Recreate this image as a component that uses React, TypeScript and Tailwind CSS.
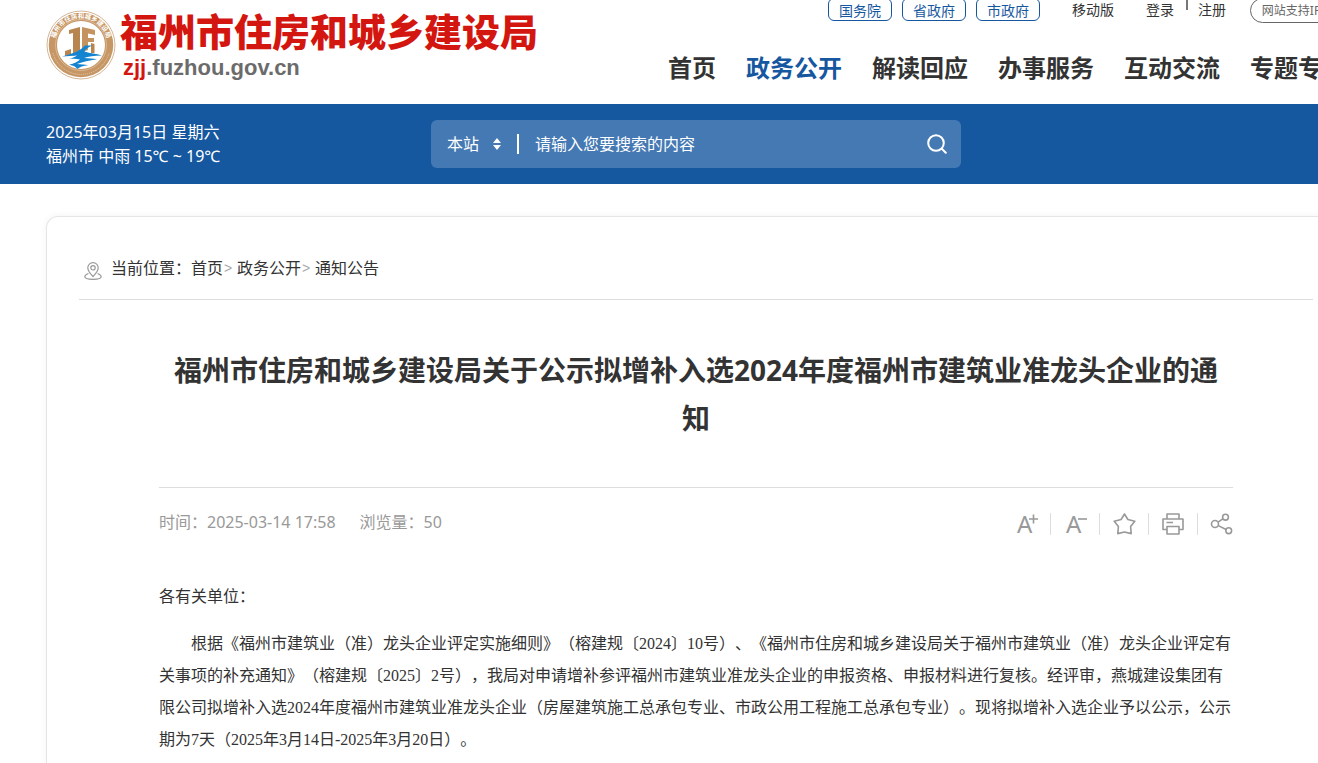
import React from "react";

const sans = "font-['Noto_Sans','Noto_Sans_CJK_SC',sans-serif]";
const song = "font-['Liberation_Serif','Noto_Sans_CJK_SC',serif]";

const portals = ["国务院", "省政府", "市政府"];
const navItems = ["首页", "政务公开", "解读回应", "办事服务", "互动交流", "专题专栏"];

function Emblem() {
  return (
    <svg viewBox="0 0 70 70" className="size-[70px] shrink-0" aria-hidden="true">
      <defs>
        <path id="ring" d="M 9.5 42 A 26.5 26.5 0 1 1 60.5 42" />
      </defs>
      <circle cx="35" cy="35" r="34" fill="#fff" stroke="#c9a27a" strokeWidth="0.8" />
      <circle cx="35" cy="35" r="32.3" fill="#c69665" />
      <circle cx="35" cy="35" r="24" fill="#fff" />
      <circle cx="35" cy="35" r="25.5" fill="none" stroke="#e7cfb4" strokeWidth="0.6" />
      <path d="M7 43 A29 29 0 0 0 63 43" fill="none" stroke="#e6cdb0" strokeWidth="1" strokeDasharray="1 1" />
      <text fontSize="6.4" fontWeight="700" fill="#fff">
        <textPath href="#ring" startOffset="50%" textAnchor="middle">福州市住房和城乡建设局</textPath>
      </text>
      <path d="M23 20 L34 17 V43 L27 46 V23 L23 24 Z" fill="#b9854f" />
      <path d="M19 41 L25 39 V45 L19 46 Z" fill="#b9854f" />
      <path d="M36 17 L49 20 V25 L42 23.500 V28 H48 V32 H42 V40 L36 42 Z" fill="#c4935f" />
      <path d="M45 33 L48.500 34 V43 H45 Z" fill="#b9854f" />
      <path d="M16 46.500 C26 44 34 41 39 35.500 L46 35.500 C41 38 39 40 38.500 41.500 C44 43.500 50 43.500 56 45.500 C48 45.800 42 46.500 38 48 C43 48.500 47 48.500 51 49.200 C43 50.500 37 51.500 31 54 C35 54.200 39 54.600 42 55.300 C37 56 34 57 31 59 C30.500 57 27 55.500 23 54.800 C28 53.500 32 51.500 34 49.500 C30 48.500 27 48.800 23 49 C27 47.800 29 47 31 45.500 C26 45.500 22 46.300 16 46.500 Z" fill="#1584d0" />
    </svg>
  );
}

function Header() {
  return (
    <header className="flex h-[104px] justify-between px-[46px]">
      <a href="#" className="flex items-start gap-1 pt-2.5">
        <Emblem />
        <span className="flex flex-col">
          <span className="h-11 whitespace-nowrap font-['Noto_Sans_CJK_SC',sans-serif] text-[38px] font-black leading-10 text-[#d3160f]">
            福州市住房和城乡建设局
          </span>
          <span className="pl-[3px] font-['Liberation_Sans',sans-serif] text-[22px] font-bold leading-7 text-[#6b6b6b]">
            <span className="text-[#d3160f]">zjj</span>.fuzhou.gov.cn
          </span>
        </span>
      </a>

      <div className="w-[678px] shrink-0">
        <div className="-mt-0.5 flex h-[25px] items-start whitespace-nowrap pl-40 text-sm">
          <div className="flex gap-2.5">
            {portals.map((p) => (
              <a key={p} href="#" className="flex h-[23px] w-16 items-center justify-center rounded-md border border-[#1658a0] pt-0.5 text-[#1658a0]">
                {p}
              </a>
            ))}
          </div>
          <a href="#" className="ml-8 leading-6">移动版</a>
          <a href="#" className="ml-8 leading-6">登录</a>
          <span className="ml-3 mr-2.5 h-3 w-0.5 bg-[#777]" />
          <a href="#" className="leading-6">注册</a>
          <a href="#" className="ml-6 flex h-[25px] w-24 items-center justify-center rounded-full border border-[#666] text-xs text-[#666]">
            网站支持IPv6
          </a>
        </div>
        <nav className="flex gap-[30px] whitespace-nowrap pt-[29px] text-2xl font-bold leading-8">
          {navItems.map((n) => (
            <a key={n} href="#" className={n === "政务公开" ? "text-[#1658a0]" : "text-[#333]"}>
              {n}
            </a>
          ))}
        </nav>
      </div>
    </header>
  );
}

function SearchBar() {
  return (
    <div className="grid h-20 grid-cols-[1fr_530px_1fr] items-center bg-[#1658a0] px-[46px] text-base leading-6 text-white">
      <div>
        <p>2025年03月15日 星期六</p>
        <p>福州市 中雨 15℃ ~ 19℃</p>
      </div>
      <form className="flex h-12 items-center rounded-md bg-[#4579b3] px-4" onSubmit={(e) => e.preventDefault()}>
        <label className="flex items-center">
          <select aria-label="搜索范围" className="w-[46px] appearance-none bg-transparent text-white outline-none">
            <option>本站</option>
          </select>
          <svg viewBox="0 0 8 12" className="h-3 w-2" fill="#fff" aria-hidden="true">
            <path d="M4 0 L8 5 H0 Z M0 7 H8 L4 12 Z" />
          </svg>
        </label>
        <span className="ml-4 h-5 w-0.5 bg-white" />
        <input
          type="text"
          aria-label="搜索内容"
          placeholder="请输入您要搜索的内容"
          className="ml-4 min-w-0 grow bg-transparent text-white outline-none placeholder:text-white"
        />
        <button type="submit" aria-label="搜索" className="-mr-2 flex size-8 items-center justify-center">
          <svg viewBox="0 0 20 20" className="size-5" fill="none" stroke="#fff" strokeWidth="2" strokeLinecap="round" aria-hidden="true">
            <circle cx="9" cy="9" r="7.800" />
            <path d="M14.800 14.800 L18.800 18.800" />
          </svg>
        </button>
      </form>
    </div>
  );
}

function Crumb({ children }: { children: React.ReactNode }) {
  return (
    <>
      <span className="w-3.5 pl-px font-['Liberation_Sans',sans-serif] text-sm leading-6 text-[#aaa]">&gt;</span>
      <a href="#">{children}</a>
    </>
  );
}

function Breadcrumb() {
  return (
    <nav className="flex h-[83px] items-end border-b border-[#ddd] pb-[19px] pl-[5px] text-base leading-6 text-[#333]">
      <svg viewBox="0 0 18 18" className="mr-[9px] h-[18px] w-[18px]" fill="none" stroke="#999" strokeWidth="1.2" aria-hidden="true">
        <path d="M9 14.500 C6 11.500 3.800 9 3.800 5.800 A5.200 5.200 0 0 1 14.200 5.800 C14.200 9 12 11.500 9 14.500 Z" />
        <circle cx="9" cy="5.800" r="2.200" />
        <path d="M4.500 11.500 C2 12.300 0.800 13.300 0.800 14.800 C0.800 16.500 4 17.300 9 17.300 C14 17.300 17.200 16.500 17.200 14.800 C17.200 13.300 16 12.300 13.500 11.500" />
      </svg>
      <span>当前位置：</span>
      <a href="#">首页</a>
      <Crumb>政务公开</Crumb>
      <Crumb>通知公告</Crumb>
    </nav>
  );
}

function ToolIcon({ children }: { children: React.ReactNode }) {
  return (
    <svg viewBox="0 0 22 22" className="size-[22px] overflow-visible" fill="none" stroke="#999" strokeWidth="1.6" strokeLinejoin="round" aria-hidden="true">
      {children}
    </svg>
  );
}

const letterA = (
  <text x="2" y="20" fontSize="24" fill="#999" stroke="none">
    A
  </text>
);

const tools = [
  { label: "放大字体", icon: <>{letterA}<path d="M14 6 H23 M18.500 1.500 V10.500" /></> },
  { label: "缩小字体", icon: <>{letterA}<path d="M14 6 H23" /></> },
  {
    label: "收藏",
    icon: <path d="M11.500 1 L14.900 6.500 L21.800 8.200 L17.600 13.600 L18.200 20.600 L11.500 19 L4.800 20.600 L5.400 13.600 L1.200 8.200 L8.100 6.500 Z" />,
  },
  {
    label: "打印",
    icon: (
      <>
        <path d="M5 6 V1 H17 V6 M5 16.500 H1 V6 H21 V16.500 H17" />
        <path d="M5 13.500 H17 V21 H5 Z M4.500 9.500 H11" />
      </>
    ),
  },
  {
    label: "分享",
    icon: (
      <>
        <circle cx="4" cy="11" r="3.500" />
        <circle cx="14.500" cy="4.200" r="2.900" />
        <circle cx="17.700" cy="17.700" r="2.900" />
        <path d="M7.100 9.200 L12.100 5.700 M7.300 12.600 L15.100 16.500" />
      </>
    ),
  },
];

function MetaRow() {
  return (
    <div className="flex items-center justify-between border-t border-[#ddd] pt-[22px]">
      <p className="flex gap-6 pb-1 text-base leading-6 text-[#999]">
        <span>时间：2025-03-14 17:58</span>
        <span>浏览量：50</span>
      </p>
      <div className="flex items-center divide-x divide-[#ddd]">
        {tools.map((t) => (
          <button key={t.label} type="button" aria-label={t.label} className="px-[13px] last:pr-0">
            <ToolIcon>{t.icon}</ToolIcon>
          </button>
        ))}
      </div>
    </div>
  );
}

export default function App() {
  return (
    <div className={`overflow-x-hidden bg-white text-[#333] ${sans}`}>
      <div className="flex min-h-screen min-w-[1392px] flex-col">
        <Header />
        <SearchBar />
        <main className="mx-[46px] mt-8 grow rounded-t-xl border border-b-0 border-[#e5e5e5] px-8 shadow-[0_0_6px_rgba(0,0,0,0.06)]">
          <Breadcrumb />
          <article className="px-20 pt-[46px]">
            <h1 className="px-2 pb-[45px] text-center text-[28px] font-bold leading-[48px]">
              福州市住房和城乡建设局关于公示拟增补入选2024年度福州市建筑业准龙头企业的通知
            </h1>
            <MetaRow />
            <div className={`pt-[43px] text-base leading-8 [text-spacing-trim:space-all] ${song}`}>
              <p className="pb-[15px]">各有关单位：</p>
              <p className="indent-8">
                根据《福州市建筑业（准）龙头企业评定实施细则》（榕建规〔2024〕10号）、《福州市住房和城乡建设局关于福州市建筑业（准）龙头企业评定有关事项的补充通知》（榕建规〔2025〕2号），我局对申请增补参评福州市建筑业准龙头企业的申报资格、申报材料进行复核。经评审，燕城建设集团有限公司拟增补入选2024年度福州市建筑业准龙头企业（房屋建筑施工总承包专业、市政公用工程施工总承包专业）。现将拟增补入选企业予以公示，公示期为7天（2025年3月14日-2025年3月20日）。
              </p>
            </div>
          </article>
        </main>
      </div>
    </div>
  );
}
